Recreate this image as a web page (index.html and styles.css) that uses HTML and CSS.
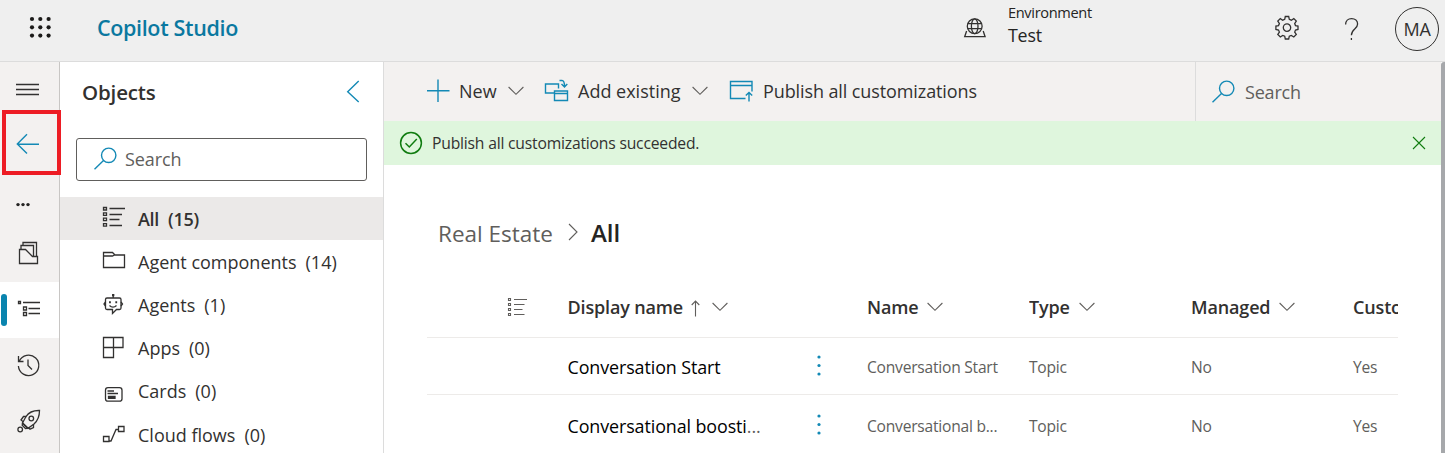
FILE: index.html
```
<!DOCTYPE html>
<html lang="en">
<head>
<meta charset="utf-8">
<title>Copilot Studio</title>
<link rel="stylesheet" href="styles.css">
</head>
<body>
<header class="topbar">
  <svg class="waffle" width="24" height="24" viewBox="28 15 24 24"><g fill="#1b1a19"><circle cx="32" cy="19" r="2.1"/><circle cx="40.3" cy="19" r="2.1"/><circle cx="48.6" cy="19" r="2.1"/><circle cx="32" cy="27.3" r="2.1"/><circle cx="40.3" cy="27.3" r="2.1"/><circle cx="48.6" cy="27.3" r="2.1"/><circle cx="32" cy="35.6" r="2.1"/><circle cx="40.3" cy="35.6" r="2.1"/><circle cx="48.6" cy="35.6" r="2.1"/></g></svg>
  <h1 class="brand">Copilot Studio</h1>
  <div class="environment">
    <svg class="ink globe" width="24" height="24" viewBox="963 17 24 24"><circle cx="974.7" cy="27.2" r="7.4"/><ellipse cx="974.7" cy="27.2" rx="3.3" ry="7.4"/><path d="M967.8 24.7h13.8M967.8 29.7h13.8M966.6 32l-1.9 5.700h20.400l-1.900-5.700"/></svg>
    <div class="env-text"><span class="env-label">Environment</span><span class="env-name">Test</span></div>
  </div>
  <div class="top-actions">
    <svg class="gear ink" width="26" height="26" viewBox="-13 -13 26 26"><path d="M-1.700-10.500h3.400l.6 2.800 2 .9 2.500-1.600 2.500 2.500-1.600 2.500.8 2 2.500.5v3.400l-2.500.6-.8 2 1.600 2.400-2.500 2.500-2.500-1.600-2 .8-.6 2.800h-3.400l-.6-2.800-2-.8-2.400 1.600-2.500-2.500 1.600-2.400-.9-2-2.600-.6v-3.400l2.600-.5.9-2-1.600-2.500 2.500-2.500 2.400 1.600 2-.9z"/><circle cy=".6" r="3.700"/></svg>
    <svg class="help ink" width="18" height="26" viewBox="1343 14 18 26"><path d="M1345.6 23.6c0-3.600 2.500-6 6-6 3.400 0 6 2.200 6 5.400 0 5.200-6.200 5-6.200 11.300"/><path d="M1351.400 37v2"/></svg>
    <div class="avatar">MA</div>
  </div>
</header>
<div class="workspace">
  <nav class="rail">
    <a class="rail-item"><svg class="ink" width="59" height="55" viewBox="0 62 59 55"><path d="M16 84.500h23M16 89.500h23M16 94.500h23"/></svg></a>
    <a class="rail-item"><svg class="blue" width="59" height="54" viewBox="0 117 59 54"><path d="M39 144.200H17.500M27 134.300l-9.700 9.700 9.700 9.500"/></svg></a>
    <a class="rail-item"><svg width="59" height="55" viewBox="0 171 59 55"><g fill="#252423"><circle cx="18" cy="204.600" r="1.700"/><circle cx="23" cy="204.600" r="1.700"/><circle cx="28" cy="204.600" r="1.700"/></g></svg></a>
    <a class="rail-item"><svg class="ink" width="59" height="56" viewBox="0 226 59 56"><path d="M19.500 249.500v14h18v-7h-5l-7-7zM21 249v-3.500h12.500v11M23 245v-2.500h13.500v14"/></svg></a>
    <a class="rail-item selected"><svg class="ink" width="59" height="56" viewBox="0 282 59 56"><path d="M23 302.500h17M28.500 308.500h11.500M28.500 313.500h11.500"/><path d="M18.500 301.500h2v2h-2zM23.500 307h3v3h-3zM23.500 312.500h3v3h-3z"/></svg></a>
    <a class="rail-item"><svg class="ink" width="59" height="56" viewBox="0 338 59 56"><path d="M19.200 361.300a10.200 10.200 0 1 1-.8 4.700M18.500 356v5.500h5M28 359.500v6l4 4"/></svg></a>
    <a class="rail-item"><svg class="ink" width="59" height="56" viewBox="0 394 59 56"><path d="M39.500 410.500c-6-.2-10.500 1.500-13.500 6l-3.500 6.500 5.500 5.300 6-4.300c4-3.500 5.500-8 5.500-13.500z"/><path d="M26.500 416.500h-3l-2.500 3.500 2.500 2M33.500 424v3.500l-3.500 1.700-1.800-1.700"/><circle cx="31.300" cy="418.500" r="2.300"/><circle cx="20.200" cy="429.500" r="2.300"/><path d="M22.500 423l5.500 5.300-2.500.2-3.300-3.300z"/></svg></a>
    <span class="callout"></span>
  </nav>
  <aside class="objects">
    <div class="objects-head"><h2>Objects</h2><svg class="blue" width="16" height="26" viewBox="345 78 16 26"><path d="M358.700 80l-11 10.700 11 10.400"/></svg></div>
    <div class="object-search"><svg class="blue" width="26" height="26" viewBox="0 0 26 26"><circle cx="16.700" cy="9.300" r="7.200"/><path d="M11.500 14.500L2.500 23.200"/></svg><span>Search</span></div>
    <ul class="object-list">
      <li class="active"><svg class="ink" width="30" height="43" viewBox="100 197 30 43"><path d="M109.500 208.500h15.500M109.500 214.500h12.500M109.500 219.500h10M109.500 225.500h12.500"/><path d="M103.500 207.500h3v2.500h-3zM103.500 212.800h3v2.500h-3zM103.500 218.200h3v2.500h-3zM103.500 223.700h3v2.500h-3z"/></svg><span>All</span><span>(15)</span></li>
      <li><svg class="ink" width="30" height="43" viewBox="100 240 30 43"><path d="M103.500 252.500h9l2.500 2.500h9.500v12.500h-21zM103.500 256h9l2-1"/></svg><span>Agent components</span><span>(14)</span></li>
      <li><svg class="ink" width="30" height="43" viewBox="100 283 30 43"><path d="M107 298h12.500q1.500 0 1.500 1.500v8.500q0 1.500-1.500 1.500h-3l-4 4v-4h-5.500q-1.500 0-1.500-1.500v-8.500q0-1.500 1.500-1.500zM113.200 298v-3M109.500 305.500c2 2 5 2 7 0"/><path d="M105.500 302l-1.500 2 1.500 2M121 302l1.500 2-1.500 2"/><path fill="#323130" d="M109.700 302h.5v.5h-.5zM116 302h.5v.5h-.5zM112.700 294.600h1v1h-1z"/></svg><span>Agents</span><span>(1)</span></li>
      <li><svg class="ink" width="30" height="43" viewBox="100 327 30 43"><path d="M103.500 337.500h19.500v10h-19.500zM103.500 337.500v20h10v-20"/></svg><span>Apps</span><span>(0)</span></li>
      <li><svg class="ink" width="30" height="43" viewBox="100 370 30 43"><rect x="105.500" y="387.700" width="16.500" height="13.500" rx="2.500"/><path d="M107.500 391h6.500M107.500 393.500h10.500"/><path fill="#323130" d="M108.500 396.500h6.500v1.800h-6.500z"/></svg><span>Cards</span><span>(0)</span></li>
      <li><svg class="ink" width="30" height="43" viewBox="100 413 30 43"><path d="M103.500 436.500h5.500v5h-5.500zM118.500 426.500h5.500v5h-5.500zM109 441h2l5-11.500h2.500"/></svg><span>Cloud flows</span><span>(0)</span></li>
    </ul>
  </aside>
  <main class="content">
    <div class="toolbar">
      <button class="tool new"><svg class="blue" width="24" height="24" viewBox="426 79 24 24"><path d="M427 90.700h22.500M438 79.500v22.500"/></svg><span>New</span><svg class="chev" width="16" height="10" viewBox="0 0 16 10"><path d="M.6 1l7.400 7.300L15.400 1"/></svg></button>
      <button class="tool add"><svg class="blue" width="24" height="24" viewBox="544 79 24 24"><path d="M554 93h-8.500v-9h13v4.500M554.500 91h13v9.500h-13zM554 93.500h14M559.500 80.500h2.500c2 0 2.500 1.500 2.500 6M561.500 84l3 3 2.800-3"/></svg><span>Add existing</span><svg class="chev" width="16" height="10" viewBox="0 0 16 10"><path d="M.6 1l7.400 7.300L15.400 1"/></svg></button>
      <button class="tool publish"><svg class="blue" width="26" height="24" viewBox="729 79 26 24"><path d="M745.500 98.500h-15v-17h21.500v10M730 85.500h22M749 101.500v-8.500M745.800 95.500l3.200-3 3.200 3"/></svg><span>Publish all customizations</span></button>
      <div class="tool-search"><svg class="blue" width="26" height="26" viewBox="0 0 26 26"><circle cx="16.700" cy="9.300" r="7.200"/><path d="M11.500 14.500L2.500 23.200"/></svg><span>Search</span></div>
    </div>
    <div class="notice">
      <svg class="green" width="24" height="24" viewBox="399 131 24 24"><circle cx="411" cy="143" r="10.400"/><path d="M405.500 143.300l3.800 3.700 7.500-8"/></svg>
      <span>Publish all customizations succeeded.</span>
      <svg class="dismiss green" width="14" height="14" viewBox="0 0 14 14"><path d="M1 1l12 12M13 1L1 13"/></svg>
    </div>
    <div class="crumbs"><span>Real Estate</span><svg class="chev" width="10" height="18" viewBox="0 0 10 18"><path d="M1 1l8 8-8 8"/></svg><strong>All</strong></div>
    <div class="grid">
      <div class="row head">
        <span class="type-icon"><svg class="muted" width="20" height="20" viewBox="507 296 20 20"><path d="M514 298.500h13M514 303.500h10.500M514 308.500h8.500M514 313.500h10.500"/><path d="M508.500 297.500h2v2h-2zM508.500 302.500h2v2h-2zM508.500 307.500h2v2h-2zM508.500 312.500h2v2h-2z"/></svg></span>
        <span class="cell display">Display name<svg class="sort muted" width="9" height="17" viewBox="0 0 9 17"><path d="M4.500 16.500V1M.7 5l3.800-4 3.800 4"/></svg><svg class="chev" width="16" height="10" viewBox="0 0 16 10"><path d="M.6 1l7.400 7.300L15.400 1"/></svg></span>
        <span></span>
        <span class="cell">Name<svg class="chev" width="16" height="10" viewBox="0 0 16 10"><path d="M.6 1l7.400 7.300L15.400 1"/></svg></span>
        <span class="cell type">Type<svg class="chev" width="16" height="10" viewBox="0 0 16 10"><path d="M.6 1l7.400 7.300L15.400 1"/></svg></span>
        <span class="cell">Managed<svg class="chev" width="16" height="10" viewBox="0 0 16 10"><path d="M.6 1l7.400 7.300L15.400 1"/></svg></span>
        <span class="cell">Custo</span>
      </div>
      <div class="row">
        <span></span><span class="title">Conversation Start</span>
        <svg class="more" width="6" height="22" viewBox="0 0 6 22"><circle cx="3" cy="2" r="1.600"/><circle cx="3" cy="10.500" r="1.600"/><circle cx="3" cy="19" r="1.600"/></svg>
        <span class="value">Conversation Start</span><span class="value">Topic</span><span class="value">No</span><span class="value">Yes</span>
      </div>
      <div class="row last">
        <span></span><span class="title">Conversational boosti<i>...</i></span>
        <svg class="more" width="6" height="22" viewBox="0 0 6 22"><circle cx="3" cy="2" r="1.600"/><circle cx="3" cy="10.500" r="1.600"/><circle cx="3" cy="19" r="1.600"/></svg>
        <span class="value">Conversational b...</span><span class="value">Topic</span><span class="value">No</span><span class="value">Yes</span>
      </div>
    </div>
  </main>
  <div class="scrollbar"></div>
</div>
</body>
</html>
```
FILE: styles.css
```
* { box-sizing: border-box; }
body {
  margin: 0;
  height: 453px;
  overflow: hidden;
  background: #fff;
  color: #323130;
  font: 18px/24px "Open Sans", "Noto Sans", sans-serif;
}
svg { display: block; flex: none; overflow: visible; fill: none; stroke-width: 1.3; }
.ink { stroke: #323130; }
.blue { stroke: #1389b5; stroke-width: 1.4; }
.green { stroke: #107c10; stroke-width: 1.5; }
.muted, .chev { stroke: #605e5c; stroke-width: 1.1; }
h1, h2 { margin: 0; font-weight: 600; }
span { white-space: nowrap; }

.topbar {
  height: 62px;
  display: flex;
  align-items: center;
  padding: 0 6px 4px 28px;
  background: #efefef;
  border-bottom: 1px solid #dcdcdc;
}
.waffle { margin-top: -3px; }
.brand { margin: -2px 0 0 45px; color: #0a78a0; font-size: 21.5px; letter-spacing: -.35px; }
.environment { display: flex; align-items: center; margin-left: auto; }
.globe { margin-top: -1px; }
.env-text { display: flex; flex-direction: column; width: 88px; margin: -10px 178px 0 21px; color: #252423; }
.env-label { font-size: 14.6px; line-height: 22px; letter-spacing: -.35px; }
.env-name { line-height: 24px; font-size: 17.800px; letter-spacing: -.2px; }
.top-actions { display: flex; align-items: center; }
.gear { margin-top: -3px; }
.help { margin: -2px 34px 0 43px; }
.avatar {
  width: 44px;
  height: 44px;
  border: 1.5px solid #323130;
  border-radius: 50%;
  text-align: center;
  line-height: 43px;
  letter-spacing: -.3px;
}

.workspace { display: flex; height: 391px; }
.rail {
  position: relative;
  flex: none;
  width: 60px;
  background: #f3f1f0;
  border-right: 1px solid #c8c6c4;
}
.rail-item { display: block; position: relative; }
.selected { background: #fff; }
.selected::before {
  content: "";
  position: absolute;
  left: 1px;
  top: 12px;
  width: 6px;
  height: 32px;
  border-radius: 3px;
  background: #0a84ae;
}
.callout {
  position: absolute;
  left: 2px;
  top: 48px;
  width: 59px;
  height: 65px;
  border: 4px solid #ed1c24;
}

.objects { flex: none; width: 324px; border-right: 1px solid #dcdcdc; }
.objects-head {
  display: flex;
  align-items: center;
  justify-content: space-between;
  height: 59px;
  padding: 0 22px;
}
.objects-head h2 { margin-top: 1px; font-size: 20.500px; letter-spacing: -.15px; }
.object-search {
  display: flex;
  align-items: center;
  height: 43px;
  margin: 17px 16px 16px;
  padding: 0 0 1px 15px;
  border: 1px solid #605e5c;
  border-radius: 3px;
  color: #605e5c;
}
.object-search span { margin-left: 7px; letter-spacing: -.1px; }
.object-list { list-style: none; margin: 0; padding: 0; }
.object-list li { display: flex; align-items: center; height: 43.200px; padding-left: 40px; }
.object-list span:nth-of-type(1) { margin: 0 9px 0 8px; }
.object-list .active { background: #ebe9e8; font-weight: 600; letter-spacing: -.3px; }

.content { flex: 1; min-width: 0; }
.toolbar { display: flex; height: 59px; background: #f3f1f0; padding-left: 42px; }
.tool {
  display: flex;
  align-items: center;
  padding: 0 0 1px;
  border: 0;
  background: none;
  color: #323130;
  font: inherit;
}
.new { width: 118px; }
.add { width: 185px; }
.tool span { margin: 0 11px 0 10px; }
.new span { margin-left: 9px; }
.tool.publish span { margin-left: 8px; letter-spacing: -.1px; }
.tool-search {
  display: flex;
  align-items: center;
  margin-left: auto;
  width: 246px;
  padding-left: 14px;
  border-left: 1px solid #dcdcdc;
  color: #605e5c;
}
.tool-search span { margin-left: 9px; letter-spacing: -.2px; }
.notice {
  display: flex;
  align-items: center;
  height: 44px;
  padding: 0 15px;
  background: #dff6dd;
  font-size: 15.700px;
  letter-spacing: -.2px;
}
.notice span { margin-left: 9px; }
.dismiss { margin-left: auto; stroke-width: 1.1; }
.crumbs { display: flex; align-items: center; height: 34px; margin: 52px 0 0 54px; font-size: 22.500px; color: #605e5c; }
.crumbs svg { margin: -5px 13px 0 15px; }
.crumbs strong { margin-top: -2px; color: #252423; font-weight: 600; font-size: 24px; }
.grid { width: 971px; margin: 26px 0 0 43px; overflow: hidden; }
.row {
  display: grid;
  grid-template-columns: 140.500px 248.500px 51px 162px 162px 162px 45px;
  align-items: center;
  height: 57px;
  border-bottom: 1px solid #edebe9;
}
.head { height: 61px; color: #323130; font-weight: 600; letter-spacing: -.15px; }
.last { border: 0; height: 60px; }
.cell { display: flex; align-items: center; overflow: hidden; }
.cell .chev { margin-left: 9px; }
.cell .sort { margin: 2px 3px 0 8px; }
.type-icon { padding-left: 80px; }
.title { color: #000; font-size: 17.900px; letter-spacing: -.1px; padding-top: 1px; }
.title i { color: #605e5c; font-style: normal; }
.value { color: #605e5c; font-size: 15.600px; letter-spacing: -.23px; padding-top: 1px; }
.more { fill: #1389b5; stroke: none; }

.scrollbar { flex: none; width: 4px; background: #a6a8ab; border-radius: 3px 0 0 0; }
```
